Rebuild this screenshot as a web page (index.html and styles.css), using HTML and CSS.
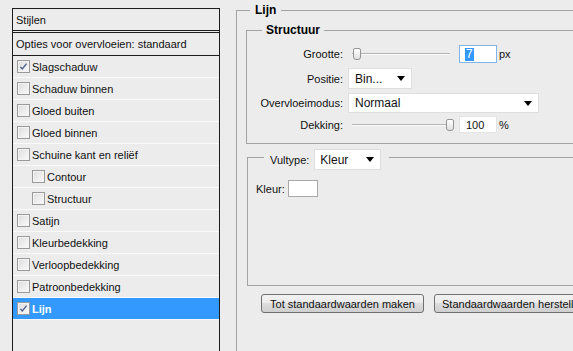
FILE: index.html
```html
<!DOCTYPE html>
<html lang="nl">
<head>
<meta charset="utf-8">
<title>Laagstijl</title>
<link rel="stylesheet" href="styles.css">
</head>
<body>
<div class="dialog">
  <div class="styles-panel">
    <div class="head head-title">Stijlen</div>
    <div class="head head-blend">Opties voor overvloeien: standaard</div>
    <div class="item"><span class="cb"><svg viewBox="0 0 11 11" width="11" height="11"><path d="M2.4 5.8 L4.3 8 L8.6 2.6" fill="none" stroke="#4a5d92" stroke-width="1.3"/></svg></span>Slagschaduw</div>
    <div class="item"><span class="cb"></span>Schaduw binnen</div>
    <div class="item"><span class="cb"></span>Gloed buiten</div>
    <div class="item"><span class="cb"></span>Gloed binnen</div>
    <div class="item"><span class="cb"></span>Schuine kant en reliëf</div>
    <div class="item sub"><span class="cb"></span>Contour</div>
    <div class="item sub"><span class="cb"></span>Structuur</div>
    <div class="item"><span class="cb"></span>Satijn</div>
    <div class="item"><span class="cb"></span>Kleurbedekking</div>
    <div class="item"><span class="cb"></span>Verloopbedekking</div>
    <div class="item"><span class="cb"></span>Patroonbedekking</div>
    <div class="item active"><span class="cb"><svg viewBox="0 0 11 11" width="11" height="11"><path d="M2.4 5.8 L4.3 8 L8.6 2.6" fill="none" stroke="#4a5d92" stroke-width="1.3"/></svg></span>Lijn</div>
  </div>

  <div class="settings">
    <fieldset class="group group-main">
      <legend class="legend legend-main">Lijn</legend>

      <fieldset class="group group-structure">
        <legend class="legend legend-structure">Structuur</legend>
        <div class="frow r1">
          <span class="lbl">Grootte:</span>
          <div class="slider"><div class="track"></div><div class="thumb" style="left:5px"></div></div>
          <span class="num num-focus"><span class="sel">7</span></span>
          <span class="unit">px</span>
        </div>
        <div class="frow r2">
          <span class="lbl">Positie:</span>
          <div class="select select-pos"><span>Bin...</span><span class="arrow"></span></div>
        </div>
        <div class="frow r3">
          <span class="lbl">Overvloeimodus:</span>
          <div class="select select-mode"><span>Normaal</span><span class="arrow"></span></div>
        </div>
        <div class="frow r4">
          <span class="lbl">Dekking:</span>
          <div class="slider"><div class="track"></div><div class="thumb" style="left:98px"></div></div>
          <span class="num num-plain">100</span>
          <span class="unit">%</span>
        </div>
      </fieldset>

      <fieldset class="group group-fill">
        <legend class="legend legend-fill">
          <div class="fill-head">
            <span class="fill-lbl">Vultype:</span>
            <div class="select select-fill"><span>Kleur</span><span class="arrow"></span></div>
          </div>
        </legend>
        <div class="color-row">
          <span>Kleur:</span>
          <span class="swatch"></span>
        </div>
      </fieldset>

      <div class="buttons">
        <button class="btn btn-make">Tot standaardwaarden maken</button>
        <button class="btn btn-reset">Standaardwaarden herstellen</button>
      </div>
    </fieldset>
  </div>
</div>
</body>
</html>
```

FILE: styles.css
```css
* { box-sizing: border-box; }

html, body {
  margin: 0;
  padding: 0;
}

body {
  width: 573px;
  height: 351px;
  overflow: hidden;
  background: #ececec;
  color: #111;
  font: 11px "Liberation Sans", Arial, sans-serif;
}

.dialog {
  display: flex;
  align-items: flex-start;
  width: 800px;
}

/* ---------- left list ---------- */
.styles-panel {
  flex: none;
  margin: 8px 0 0 12px;
  width: 208px;
  min-height: 400px;
  border: 1px solid #1c1c1c;
}

.head {
  display: flex;
  align-items: center;
  padding-left: 3px;
}

.head-title {
  height: 24px;
  border-bottom: 3px double #1c1c1c;
}

.head-blend {
  height: 23px;
  border-bottom: 1px solid #1c1c1c;
}

.item {
  display: flex;
  align-items: center;
  height: 22px;
  padding-left: 4px;
  border-bottom: 1px solid #fafafa;
}

.item.sub { padding-left: 19px; }

.item.active {
  background: #3399ff;
  color: #fff;
  font-weight: bold;
}

.cb {
  flex: none;
  width: 13px;
  height: 13px;
  margin-right: 2px;
  border: 1px solid #9a9a9a;
  background: linear-gradient(135deg, #dcdcdc 0%, #efefef 60%, #fafafa 100%);
  box-shadow: inset 0 0 0 1px #f4f4f4;
  display: flex;
}

.cb svg { display: block; }

/* ---------- right side ---------- */
.settings {
  flex: none;
  margin-left: 16px;
}

.group {
  margin: 0;
  padding: 0;
  min-width: 0;
  border: 1px solid #a3a3a3;
}

.legend {
  font-size: 12px;
  font-weight: bold;
  line-height: 14px;
  color: #000;
}

.group-main {
  margin-top: 3px;
  width: 420px;
  padding: 0 0 100px 0;
}

.legend-main {
  margin-left: 13px;
  padding: 0 5px;
}

.group-structure {
  margin: 6px 0 0 9px;
  width: 400px;
  padding: 8px 0 10px 0;
}

.legend-structure {
  margin-left: 15px;
  padding: 0 4px;
}

.frow {
  display: flex;
  align-items: center;
}

.lbl {
  flex: none;
  width: 96px;
  margin-right: 5px;
  text-align: right;
}

.r1 { height: 18px; }
.r2 { height: 21px; margin-top: 5px; }
.r3 { height: 20px; margin-top: 4px; }
.r4 { height: 17px; margin-top: 3px; }

.slider {
  position: relative;
  flex: none;
  display: flex;
  align-items: center;
  width: 104px;
  height: 14px;
  margin-right: 7px;
  padding: 0 2px 0 4px;
}

.track {
  flex: 1;
  height: 2px;
  border-top: 1px solid #b4b4b4;
  background: #fbfbfb;
}

.thumb {
  position: absolute;
  top: 1px;
  width: 8px;
  height: 12px;
  border: 1px solid #959595;
  border-radius: 2px 2px 3px 3px;
  background: linear-gradient(#ffffff, #e0e0e0);
}

.num {
  flex: none;
  display: flex;
  align-items: center;
  width: 38px;
  height: 100%;
  background: #fff;
  border: 1px solid #e4e4e4;
}

.num-focus {
  border-color: #7eb4ea;
  padding-left: 5px;
}

.sel {
  background: #3399ff;
  color: #fff;
  font-size: 12px;
  line-height: 13px;
  padding: 0 1px;
}

.num-plain { padding-left: 6px; }

.unit { margin-left: 2px; }

.select {
  flex: none;
  display: flex;
  align-items: center;
  justify-content: space-between;
  height: 100%;
  background: #fff;
  border: 1px solid #dedede;
  font-size: 12px;
  padding: 0 6px;
}

.select-pos { width: 64px; }
.select-mode { width: 191px; }
.select-fill { width: 67px; height: 21px; padding: 0 6px 0 5px; }

.arrow {
  width: 0;
  height: 0;
  border-left: 4px solid transparent;
  border-right: 4px solid transparent;
  border-top: 5px solid #000;
}

.group-fill {
  margin: 5px 0 0 10px;
  width: 400px;
  padding: 15px 0 88px 8px;
}

.legend-fill {
  margin-left: 8px;
  padding: 0 8px 0 6px;
  height: 16px;
  font-size: 11px;
  font-weight: normal;
  line-height: normal;
  color: #111;
}

.fill-head {
  display: flex;
  align-items: center;
  height: 21px;
}

.fill-lbl { margin-right: 5px; }

.color-row {
  display: flex;
  align-items: center;
  height: 17px;
}

.swatch {
  width: 30px;
  height: 17px;
  margin-left: 3px;
  background: #fff;
  border: 1px solid #a8a8a8;
}

.buttons {
  display: flex;
  gap: 10px;
  margin: 8px 0 0 24px;
}

.btn {
  flex: none;
  display: flex;
  align-items: center;
  height: 19px;
  margin: 0;
  padding: 0;
  border: 1px solid #707070;
  border-radius: 3px;
  background: linear-gradient(#f2f2f2 0%, #ebebeb 50%, #dddddd 50%, #cfcfcf 100%);
  color: #111;
  font: 11px "Liberation Sans", Arial, sans-serif;
  white-space: nowrap;
}

.btn-make {
  width: 163px;
  justify-content: center;
}

.btn-reset {
  width: 172px;
  justify-content: flex-start;
  padding-left: 7px;
}
```
